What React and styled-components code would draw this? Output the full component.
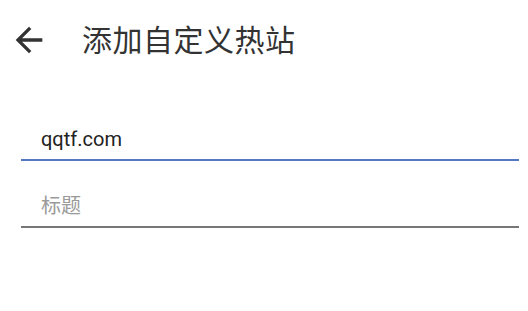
import React from 'react';
import styled, { createGlobalStyle } from 'styled-components';
import { MdArrowBack } from 'react-icons/md';

const GlobalStyle = createGlobalStyle`
  html, body {
    margin: 0;
    padding: 0;
    background: #ffffff;
  }
  body {
    font-family: Roboto, "Noto Sans CJK SC", sans-serif;
  }
`;

const Page = styled.div`
  width: 528px;
  height: 311px;
  background: #ffffff;
  overflow: hidden;
`;

const Toolbar = styled.header`
  display: flex;
  align-items: center;
  height: 80px;
  padding-left: 9px;
`;

const BackButton = styled.button`
  display: flex;
  align-items: center;
  justify-content: center;
  width: 40px;
  height: 40px;
  padding: 0;
  border: none;
  background: none;
  color: #333333;
  cursor: pointer;
`;

const Title = styled.h1`
  margin: 0 0 4px 33px;
  font-family: "Noto Sans CJK SC", sans-serif;
  font-size: 30px;
  font-weight: 400;
  color: #333333;
  letter-spacing: 0.5px;
`;

const Form = styled.form`
  display: flex;
  flex-direction: column;
  padding: 14px 9px 0 21px;
`;

const Field = styled.div`
  display: flex;
  align-items: flex-end;
  height: 67px;
`;

const Input = styled.input`
  width: 100%;
  height: 40px;
  box-sizing: content-box;
  padding: 0 20px;
  margin: 0;
  border: none;
  border-bottom: 2px solid ${({ $active }) => ($active ? '#5677c4' : '#777777')};
  background: transparent;
  outline: none;
  font-family: Roboto, "Noto Sans CJK SC", sans-serif;
  font-size: 20px;
  line-height: 40px;
  color: #222222;

  &::placeholder {
    font-family: "Noto Sans CJK SC", sans-serif;
    color: #9a9a9a;
  }
`;

const App = () => (
  <Page>
    <GlobalStyle />
    <Toolbar>
      <BackButton aria-label="返回">
        <MdArrowBack size={40} />
      </BackButton>
      <Title>添加自定义热站</Title>
    </Toolbar>
    <Form>
      <Field>
        <Input $active defaultValue="qqtf.com" />
      </Field>
      <Field>
        <Input placeholder="标题" />
      </Field>
    </Form>
  </Page>
);

export default App;
